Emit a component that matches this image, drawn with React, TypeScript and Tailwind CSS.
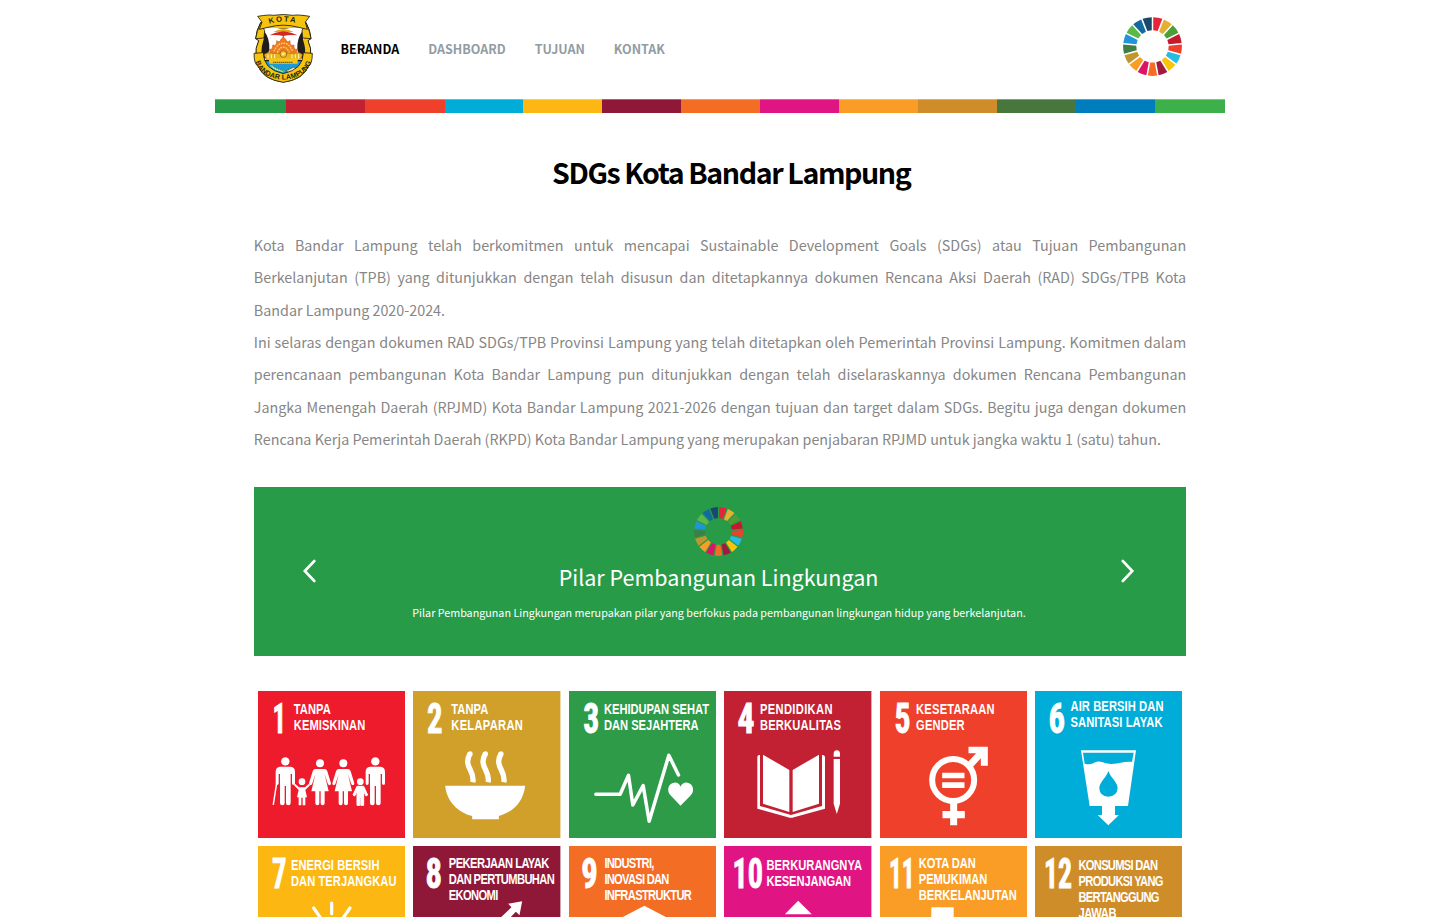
import type { ReactNode } from "react";

type Line = [text: string, x: number, baseline: number, width: number];

type Goal = {
  id: string;
  color: string;
  num: [x: number, width: number, baseline: number];
  lines: Line[];
  icon: ReactNode;
};

const WHEEL = [
  "#e5243b", "#e3b034", "#4c9f38", "#c5192d", "#ef402b", "#26bde2", "#fcc30b", "#a21942", "#f36d25",
  "#dd1367", "#f99d26", "#c2962f", "#3f7e44", "#2096d6", "#5bba47", "#136a9f", "#19486a",
];

const STRIPE: [string, string][] = [
  ["bg-[#279b48]", "w-[71px]"],
  ["bg-[#c22033]", "w-[79.2px]"],
  ["bg-[#ef402c]", "w-[79.2px]"],
  ["bg-[#00add8]", "w-[78.8px]"],
  ["bg-[#fdb713]", "w-[78.8px]"],
  ["bg-[#8f1838]", "w-[79.2px]"],
  ["bg-[#f36d25]", "w-[79px]"],
  ["bg-[#e11484]", "w-[79px]"],
  ["bg-[#f99d26]", "w-[79px]"],
  ["bg-[#cf8d2a]", "w-[78.8px]"],
  ["bg-[#48773e]", "w-[78.8px]"],
  ["bg-[#007dbc]", "w-[79px]"],
  ["bg-[#3eb049]", "w-[69.6px]"],
];

function Wheel({ className }: { className: string }) {
  const step = (Math.PI * 2) / 17;
  const pt = (r: number, a: number) => `${(Math.sin(a) * r).toFixed(2)} ${(-Math.cos(a) * r).toFixed(2)}`;
  return (
    <svg viewBox="-50 -50 100 100" className={className}>
      {WHEEL.map((c, i) => {
        const a = i * step;
        const b = a + step;
        const go = 1.3 / 50;
        const gi = 1.3 / 27.5;
        return (
          <path
            key={c}
            fill={c}
            d={`M${pt(27.5, a + gi)} L${pt(49.8, a + go)} A49.8 49.8 0 0 1 ${pt(49.8, b - go)} L${pt(27.5, b - gi)} Z`}
          />
        );
      })}
    </svg>
  );
}

function Crest() {
  return (
    <svg viewBox="0 0 240 252" className="mb-[3px] h-[84px] w-[80px] shrink-0">
      <defs>
        <path id="crest-top" d="M75 54 Q118 39 165 54" />
        <path id="crest-bottom" d="M33 156 C42 242 194 242 203 156" />
      </defs>
      <path
        d="M50 50 Q37 72 35 98 L44 104 Q33 126 36 150 C42 206 74 222 118 228 C162 222 194 206 200 150 Q203 126 192 104 L201 98 Q199 72 186 50 Z"
        fill="#f6c40f" stroke="#1d1a14" strokeWidth="3"
      />
      <path d="M60 66 L176 66 Q184 90 178 108 Q190 140 180 164 Q160 202 118 209 Q76 202 56 164 Q46 140 58 108 Q52 90 60 66Z" fill="#fff" />
      <path d="M60 74 Q78 98 76 130 L69 156 L54 158 Q49 132 57 108 Q61 94 60 74Z M176 74 Q158 98 160 130 L167 156 L182 158 Q187 132 179 108 Q175 94 176 74Z" fill="#221c1a" />
      <path d="M58 164 H178 Q162 202 118 208 Q74 202 58 164Z" fill="#1e9bd7" stroke="#1d1a14" strokeWidth="4" />
      <path d="M76 178 Q90 194 116 199 L126 196 Q98 190 82 176Z" fill="#d8e5c8" stroke="#1a9a50" strokeWidth="4" strokeDasharray="3 3" />
      <path d="M126 195 L150 183 L158 192 L134 200Z" fill="#f1e6c4" stroke="#1d1a14" strokeWidth="2" strokeDasharray="4 2" />
      <path d="M99 69 Q118 62 137 69 Z" fill="#a8843a" />
      <path d="M88 78 Q100 71 118 69 Q136 71 149 78 Z" fill="#e3a81c" />
      <path d="M77 88 Q92 79 118 76 Q144 79 160 88 Q136 86 118 90 Q98 86 77 88Z" fill="#d22a20" />
      <path d="M118 88 V104" stroke="#d22a20" strokeWidth="3" />
      <path d="M80 148 L76 130 Q88 132 86 117 Q99 122 98 104 Q107 112 111 100 L118 93 L125 100 Q129 112 138 104 Q137 122 150 117 Q148 132 160 130 L156 148 Z" fill="#ee7a22" stroke="#d65a20" strokeWidth="2" />
      <path d="M90 136 Q102 110 118 112 Q134 110 146 136 M100 140 Q108 122 118 124 Q128 122 136 140" fill="none" stroke="#fbdc5a" strokeWidth="4" strokeDasharray="5 3" />
      <path d="M60 146 Q72 136 86 142 H150 Q164 136 176 146 L170 160 H66Z" fill="#e9b41c" stroke="#a47a14" strokeWidth="2" />
      <path d="M72 145 V158 M82 145 V158 M92 145 V158 M144 145 V158 M154 145 V158 M164 145 V158" stroke="#fff6cf" strokeWidth="3" />
      <circle cx="118" cy="144" r="10" fill="#f4c71b" stroke="#a4601a" strokeWidth="2.5" />
      <circle cx="118" cy="144" r="4" fill="#fff1b0" />
      <path d="M74 157 H162 L160 173 H76Z" fill="#f3c61c" />
      <path d="M88 169 H148" stroke="#3a2a14" strokeWidth="4" strokeDasharray="3 3" />
      <path d="M50 50 L40 76 L35 98 L60 96 L62 74 Z M186 50 L196 76 L201 98 L176 96 L174 74 Z" fill="#f6c40f" stroke="#1d1a14" strokeWidth="2.5" />
      <path d="M41 31 Q78 25 88 28 Q118 23 148 28 Q160 25 197 31 L184 48 L190 70 L164 64 Q118 51 72 64 L46 70 L54 48 Z" fill="#f6c40f" stroke="#1d1a14" strokeWidth="2.5" />
      <path d="M30 142 L58 140 Q58 190 118 203 Q178 190 178 140 L205 142 Q205 174 193 182 Q174 221 118 229 Q62 221 43 182 Q30 174 30 142Z" fill="#f6c40f" stroke="#1d1a14" strokeWidth="2.5" />
      <text fontFamily="Liberation Sans" fontWeight="700" fontSize="23" fill="#241c10" letterSpacing="5">
        <textPath href="#crest-top" startOffset="1">KOTA</textPath>
      </text>
      <text fontFamily="Liberation Sans" fontWeight="700" fontSize="21" fill="#241c10" letterSpacing="0.6">
        <textPath href="#crest-bottom" startOffset="50%" textAnchor="middle">BANDAR LAMPUNG</textPath>
      </text>
    </svg>
  );
}

function Man({ x }: { x: number }) {
  return (
    <g transform={`translate(${x} 0)`}>
      <circle cy="225" r="12.5" />
      <path d="M-16 241 H16 Q29 242 29 256 V291 Q29 296 25 296 Q20 296 20 291 V263 H16 V350 Q16 357 9 357 Q2 357 2 350 V299 H-2 V350 Q-2 357 -9 357 Q-16 357 -16 350 V263 H-20 V291 Q-20 296 -25 296 Q-29 296 -29 291 V256 Q-29 242 -16 241Z" />
    </g>
  );
}

function Woman({ x }: { x: number }) {
  return (
    <g transform={`translate(${x} 0)`}>
      <circle cy="231" r="12" />
      <path d="M-13 248 H13 Q20 248 22 255 L33 291 Q33 297 28 297 L24 294 L14 264 L26 315 H14 V351 Q14 357 8 357 Q2 357 2 351 V315 H-2 V351 Q-2 357 -8 357 Q-14 357 -14 351 V315 H-26 L-14 264 L-24 294 L-28 297 Q-33 297 -33 291 L-22 255 Q-20 248 -13 248Z" />
    </g>
  );
}

const goals: Goal[] = [
  {
    id: "1", color: "#ed1b2b", num: [14.6, 13.5, 42.3],
    lines: [["TANPA", 36.3, 23.3, 37], ["KEMISKINAN", 36.3, 39.3, 71.5]],
    icon: (
      <g transform="scale(.33333) translate(-11 -14)">
        <Man x={93} />
        <Man x={363} />
        <Woman x={197} />
        <Woman x={267} />
        <path d="M67 290 L57 354" stroke="#fff" strokeWidth="4.5" strokeLinecap="round" />
        <circle cx="143" cy="286" r="10" />
        <path d="M122 292 L134 303 H152 L164 292 L167 297 L153 311 L158 333 H153 V357 H145 V334 H141 V357 H133 V333 H128 L133 311 L119 297Z" />
        <circle cx="318" cy="286" r="10" />
        <path d="M308 300 H328 L340 326 L335 329 L328 315 V357 H319.500 V334 H316.500 V357 H308 V315 L301 329 L296 326Z" strokeWidth="3" stroke="#fff" strokeLinejoin="round" />
      </g>
    ),
  },
  {
    id: "2", color: "#d0a02b", num: [14, 15.5, 42.3],
    lines: [["TANPA", 38.8, 23.3, 37], ["KELAPARAN", 38.8, 39.3, 71.5]],
    icon: (
      <g transform="scale(.33333) translate(-476.500 -14)">
        <path d="M573 298 H813 C808 346 776 378 734 389 V399 H654 V389 C612 378 578 346 573 298Z" />
        <path d="M648 201 C625 242 663 250 656 288 M694 201 C671 242 709 250 702 288 M741 201 C718 242 756 250 749 288" fill="none" stroke="#fff" strokeWidth="16" />
        <circle cx="648" cy="202" r="7.500" /><circle cx="694" cy="202" r="7.500" /><circle cx="741" cy="202" r="7.500" />
      </g>
    ),
  },
  {
    id: "3", color: "#2d9b48", num: [14.2, 16, 42.3],
    lines: [["KEHIDUPAN SEHAT", 35.5, 23.3, 105], ["DAN SEJAHTERA", 35.5, 39.3, 94.5]],
    icon: (
      <g transform="scale(.33333) translate(-14.500 -14)">
        <path d="M95 324 H168 L193 267 L206 356 L237 298 L255 405 L314 207 L343 266" fill="none" stroke="#fff" strokeWidth="10.5" strokeLinecap="round" strokeLinejoin="round" />
        <path d="M349 358 L319 327 C306 312 313 290 330 289 C340 288 347 294 349 301 C352 294 359 288 369 289 C386 290 393 312 380 327Z" />
      </g>
    ),
  },
  {
    id: "4", color: "#c22033", num: [13.5, 17, 42.3],
    lines: [["PENDIDIKAN", 36.5, 23.3, 72.5], ["BERKUALITAS", 36.5, 39.3, 81]],
    icon: (
      <g transform="scale(.33333) translate(-480 -14)">
        <path d="M597 205 L676 251 V377 L597 352Z M765 205 L686 251 V377 L765 352Z" />
        <path d="M580 212 Q580 205 588 206 V359 L681 386 L774 359 V206 Q782 205 783 212 V367 L690 393 Q681 396 672 393 L580 367Z" />
        <path d="M809 211 V201 Q810 192 818.500 192 Q827 192 828 201 V211Z M809 218 H828 V352 L818.500 383 L809 352Z" />
      </g>
    ),
  },
  {
    id: "5", color: "#ef402b", num: [14.5, 16, 42.3],
    lines: [["KESETARAAN", 36.6, 23.3, 78.5], ["GENDER", 36.6, 39.3, 48.5]],
    icon: (
      <g transform="scale(.33333) translate(-17.500 -14)">
        <circle cx="237" cy="281" r="63" fill="none" stroke="#fff" strokeWidth="18" />
        <path d="M204 259 H271 V276 H204Z M204 288 H271 V305 H204Z M228 348 H249 V374 H272 V396 H249 V417 H228 V396 H205 V374 H228Z M283 181 H341 V238 H320 V216 L296 242 L281 227 L306 201 H283Z" />
      </g>
    ),
  },
  {
    id: "6", color: "#00add8", num: [13.6, 16.5, 42.3],
    lines: [["AIR BERSIH DAN", 36, 20.4, 93], ["SANITASI LAYAK", 36, 36.4, 92]],
    icon: (
      <g transform="scale(.33333) translate(-483 -14)">
        <path fillRule="evenodd" d="M621 192 H786 L762 359 H723 V386 H735 L703 417 L671 386 H684 V359 H647Z M627 199 L632 232 C662 240 660 218 687 228 C718 242 748 222 774 227 L779 199Z M703 254 C696 276 676 287 676 306 Q677 330 703 331 Q729 330 731 306 C731 287 711 276 703 254Z" />
      </g>
    ),
  },
  {
    id: "7", color: "#fdb713", num: [14, 14.5, 42.5],
    lines: [["ENERGI BERSIH", 33.5, 24, 88.5], ["DAN TERJANGKAU", 33.5, 40, 105.5]],
    icon: (
      <g transform="scale(.33333) translate(-11 -17)">
        <path d="M232 188 V220 M178 203 L198 232 M287 203 L267 232 M134 240 L160 258 M330 240 L304 258" stroke="#fff" strokeWidth="9.500" strokeLinecap="round" />
        <circle cx="232" cy="310" r="50" fill="none" stroke="#fff" strokeWidth="12" />
      </g>
    ),
  },
  {
    id: "8", color: "#8f1838", num: [12.6, 16.5, 42.5],
    lines: [["PEKERJAAN LAYAK", 36.3, 22, 100.5], ["DAN PERTUMBUHAN", 36.3, 38.2, 106], ["EKONOMI", 36.3, 54.3, 49.5]],
    icon: (
      <g transform="scale(.33333) translate(-476.500 -17)">
        <path d="M762 190 L804 183 L796 225 L785 214 L740 262 L724 246 L772 201Z" />
        <path d="M580 380 V300 H620 V380Z M640 380 V280 H680 V380Z M700 380 V290 H740 V380Z" />
      </g>
    ),
  },
  {
    id: "9", color: "#f36d25", num: [12.2, 16.5, 42.5],
    lines: [["INDUSTRI,", 35.9, 22, 50], ["INOVASI DAN", 35.9, 38.2, 65], ["INFRASTRUKTUR", 35.9, 54.3, 87.5]],
    icon: (
      <g transform="scale(.33333) translate(-945 -17)">
        <path d="M1171 196 L1245 235 V320 L1171 360 L1097 320 V235Z" />
      </g>
    ),
  },
  {
    id: "10", color: "#e11484", num: [8.5, 30.5, 42.5],
    lines: [["BERKURANGNYA", 43, 24, 95.5], ["KESENJANGAN", 43, 40, 84.5]],
    icon: (
      <g transform="scale(.33333) translate(-11.500 -17)">
        <path d="M234 181 L275 222 H194Z M194 340 H275 L234 381Z" />
      </g>
    ),
  },
  {
    id: "11", color: "#f99d26", num: [9, 25.5, 42.5],
    lines: [["KOTA DAN", 39.3, 21.8, 57], ["PEMUKIMAN", 39.3, 37.8, 68.5], ["BERKELANJUTAN", 39.3, 53.8, 98]],
    icon: (
      <g transform="scale(.33333) translate(-479 -17)">
        <path d="M633 201 H700 V360 H633Z M580 280 H625 V360 H580Z M708 300 H760 V360 H708Z" />
      </g>
    ),
  },
  {
    id: "12", color: "#cf8d2a", num: [9, 28, 42.5],
    lines: [["KONSUMSI DAN", 44, 23.8, 79.5], ["PRODUKSI YANG", 44, 39.8, 85], ["BERTANGGUNG", 44, 56, 81], ["JAWAB", 44, 71.6, 38]],
    icon: <path d="M40 105 q15 -20 30 0 t30 0" fill="none" stroke="#fff" strokeWidth="7" />,
  },
];

const LABEL_SCALE = 0.78;
const NUM_SCALE = 0.7;

function GoalTile({ goal }: { goal: Goal }) {
  const [nx, nw, ny] = goal.num;
  return (
    <svg viewBox="0 0 147.4 147.4" className="block size-[147.4px]" fill="#fff">
      <rect width="147.4" height="147.4" fill={goal.color} />
      <g transform={`scale(${NUM_SCALE} 1)`}>
        <text x={nx / NUM_SCALE} y={ny} fontFamily="Roboto Condensed, Liberation Sans, sans-serif" fontWeight="700" fontSize="42.2" stroke="#fff" strokeWidth="0.9" textLength={nw / NUM_SCALE} lengthAdjust="spacingAndGlyphs">
          {goal.id}
        </text>
      </g>
      <g transform={`scale(${LABEL_SCALE} 1)`}>
        {goal.lines.map(([t, x, y, w]) => (
          <text key={t} x={(x - 0.5) / LABEL_SCALE} y={y} fontFamily="Liberation Sans, sans-serif" fontWeight="700" fontSize="14.3" textLength={w / LABEL_SCALE} lengthAdjust="spacing">
            {t}
          </text>
        ))}
      </g>
      {goal.icon}
    </svg>
  );
}

function Chevron({ flip = false }: { flip?: boolean }) {
  return (
    <svg viewBox="0 0 14 24" className="h-6 w-3.5" fill="none" stroke="#fff" strokeWidth="2.6" strokeLinecap="round">
      <path d={flip ? "M1.800 2 L11.300 12 L1.800 22" : "M12.300 2 L2.800 12 L12.300 22"} />
    </svg>
  );
}

export default function App() {
  return (
    <div className="flex h-[917px] justify-center overflow-hidden bg-white font-['Noto_Sans_CJK_KR','Noto_Sans',sans-serif]">
      <div className="w-[1009.4px]">
        <header className="flex h-[99px] items-center pl-[28.700px]">
          <Crest />
          <nav className="mb-[1px] ml-[16.500px] flex gap-[29px] text-[12.500px] leading-5 font-bold text-[#929ca3]">
            <a className="text-black">BERANDA</a>
            <a>DASHBOARD</a>
            <a>TUJUAN</a>
            <a>KONTAK</a>
          </nav>
          <Wheel className="mr-[42.700px] mb-[6px] ml-auto size-[59px]" />
        </header>

        <div className="flex h-3.5">
          {STRIPE.map(([bg, w]) => (
            <div key={bg} className={`${bg} ${w} shrink-0 border-t border-white/30`} />
          ))}
        </div>

        <main className="mx-[38.500px]">
          <h1 className="mt-[39px] pl-[22.500px] text-center text-[28.600px] leading-[40px] font-bold tracking-[-1.420px] text-black">
            SDGs Kota Bandar Lampung
          </h1>

          <div className="mt-[36.700px] text-justify text-[14.340px] leading-[32.400px] text-[#868686]">
            <p>
              Kota Bandar Lampung telah berkomitmen untuk mencapai Sustainable Development Goals (SDGs) atau Tujuan
              Pembangunan Berkelanjutan (TPB) yang ditunjukkan dengan telah disusun dan ditetapkannya dokumen Rencana
              Aksi Daerah (RAD) SDGs/TPB Kota Bandar Lampung 2020-2024.
            </p>
            <p>
              Ini selaras dengan dokumen RAD SDGs/TPB Provinsi Lampung yang telah ditetapkan oleh Pemerintah Provinsi
              Lampung. Komitmen dalam perencanaan pembangunan Kota Bandar Lampung pun ditunjukkan dengan telah
              diselaraskannya dokumen Rencana Pembangunan Jangka Menengah Daerah (RPJMD) Kota Bandar Lampung 2021-2026
              dengan tujuan dan target dalam SDGs. Begitu juga dengan dokumen Rencana Kerja Pemerintah Daerah (RKPD)
              Kota Bandar Lampung yang merupakan penjabaran RPJMD untuk jangka waktu 1 (satu) tahun.
            </p>
          </div>

          <section className="mt-[31.800px] flex h-[168.300px] items-center justify-between bg-[#279b48] pr-[51.500px] pl-[48.500px] text-white">
            <Chevron />
            <div className="flex h-full flex-col items-center pt-[19.500px]">
              <Wheel className="ml-[1px] size-[49px]" />
              <h2 className="mt-[5.500px] text-[21.500px] leading-[32px]">Pilar Pembangunan Lingkungan</h2>
              <p className="mt-[9px] ml-[1px] text-[10.750px] leading-[22px]">
                Pilar Pembangunan Lingkungan merupakan pilar yang berfokus pada pembangunan lingkungan hidup yang
                berkelanjutan.
              </p>
            </div>
            <Chevron flip />
          </section>

          <section className="mt-[35px] grid grid-cols-[repeat(6,155.400px)] gap-y-2 pl-[4.200px]">
            {goals.map((g) => (
              <GoalTile key={g.id} goal={g} />
            ))}
          </section>
        </main>
      </div>
    </div>
  );
}
